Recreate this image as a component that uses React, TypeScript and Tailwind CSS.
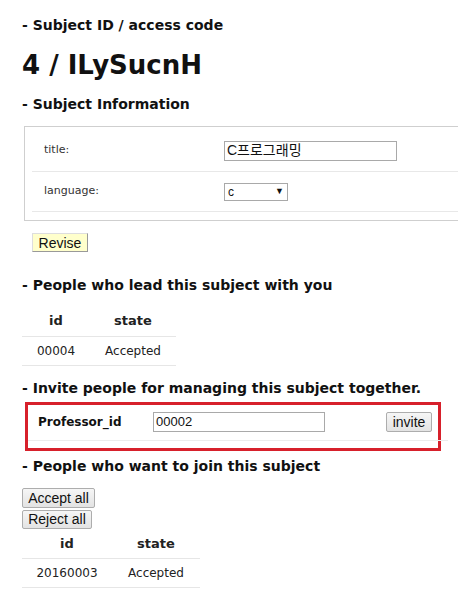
const body = { fontFamily: '"DejaVu Sans", Verdana, sans-serif' };
const arial = { fontFamily: '"Liberation Sans", Arial, "Noto Sans CJK KR", sans-serif' };

function Heading({ children, className = "" }: { children: React.ReactNode; className?: string }) {
  return (
    <h2 className={`text-[14px] font-bold leading-[18px] text-[#111] ${className}`}>
      - {children}
    </h2>
  );
}

function GrayButton({ label, className = "" }: { label: string; className?: string }) {
  return (
    <button
      style={arial}
      className={`flex items-center justify-center rounded-[2px] border border-[#adadad] bg-gradient-to-b from-[#f6f6f6] to-[#e3e3e3] text-[14px] leading-none text-[#111] ${className}`}
    >
      {label}
    </button>
  );
}

function PeopleTable({ cols, row }: { cols: [number, number]; row: [string, string] }) {
  return (
    <table className="border-collapse text-[#222]">
      <thead>
        <tr className="h-[30px] border-b border-[#e6e6e6]">
          <th style={{ width: cols[0] }} className="text-[13px] font-bold">id</th>
          <th style={{ width: cols[1] }} className="text-[13px] font-bold">state</th>
        </tr>
      </thead>
      <tbody>
        <tr className="h-[29px] border-b border-[#e6e6e6]">
          <td className="text-center text-[12px]">{row[0]}</td>
          <td className="text-center text-[12px]">{row[1]}</td>
        </tr>
      </tbody>
    </table>
  );
}

export default function App() {
  return (
    <div style={body} className="h-[614px] w-[458px] overflow-hidden bg-white pl-[22px] pt-[16px] text-[#111]">
      <Heading>Subject ID / access code</Heading>
      <h1 className="mt-[16px] text-[26px] font-bold leading-[30px]">4 / ILySucnH</h1>
      <Heading className="mt-[15px]">Subject Information</Heading>

      <div className="ml-[2px] mt-[13px] w-[460px] border border-[#cfcfcf] px-[7px] pb-[8px] pt-[3px]">
        <div className="flex h-[42px] items-center border-b border-[#e8e8e8] pl-[12px]">
          <span className="w-[180px] text-[11px] text-[#333]">title:</span>
          <div
            style={arial}
            className="flex h-[20px] w-[173px] items-center border border-[#a9a9a9] px-[2px] text-[14px] text-[#111]"
          >
            C프로그래밍
          </div>
        </div>
        <div className="flex h-[40px] items-center border-b border-[#e8e8e8] pl-[12px]">
          <span className="w-[180px] text-[11px] text-[#333]">language:</span>
          <div
            style={arial}
            className="flex h-[18px] w-[64px] items-center justify-between border border-[#a9a9a9] px-[3px] text-[12px] text-[#111]"
          >
            <span>c</span>
            <span className="text-[9px]">▼</span>
          </div>
        </div>
      </div>

      <button
        style={arial}
        className="ml-[10px] mt-[12px] flex h-[19px] w-[56px] items-center justify-center border border-b-[#999] border-l-[#ddd] border-r-[#999] border-t-[#ddd] bg-[#ffffcc] text-[14px] leading-none text-[#111]"
      >
        Revise
      </button>

      <Heading className="mt-[24px]">People who lead this subject with you</Heading>
      <div className="mt-[12px]">
        <PeopleTable cols={[68, 86]} row={["00004", "Accepted"]} />
      </div>

      <Heading className="mt-[13px]">Invite people for managing this subject together.</Heading>
      <div className="ml-[3px] mt-[5px] h-[49px] w-[416px] border-[3px] border-[#d7202b]">
        <div className="flex h-[36px] w-[420px] items-center border-b border-[#ececec] pl-[10px]">
          <span className="w-[115px] text-[12px] font-bold text-[#111]">Professor_id</span>
          <div
            style={arial}
            className="flex h-[20px] w-[172px] items-center border border-[#a9a9a9] px-[2px] text-[13px] text-[#111]"
          >
            00002
          </div>
          <GrayButton label="invite" className="ml-[61px] h-[20px] w-[46px]" />
        </div>
      </div>

      <Heading className="mt-[6px]">People who want to join this subject</Heading>
      <GrayButton label="Accept all" className="mt-[13px] h-[20px] w-[73px]" />
      <GrayButton label="Reject all" className="mt-[2px] h-[19px] w-[70px]" />
      <PeopleTable cols={[90, 88]} row={["20160003", "Accepted"]} />
    </div>
  );
}
